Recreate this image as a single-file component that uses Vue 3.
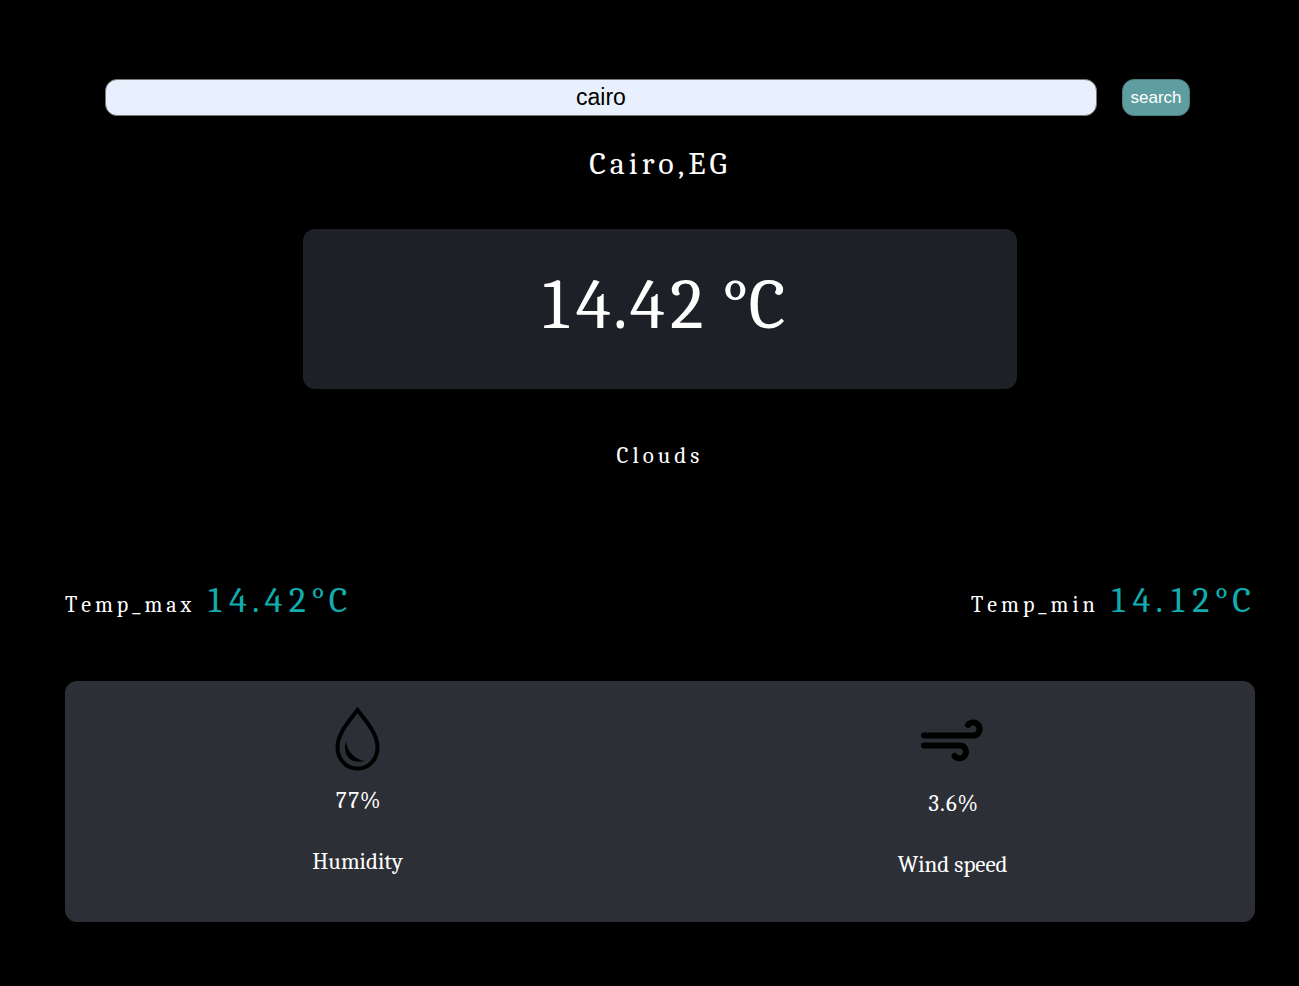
<script setup>
import { ref } from 'vue'

const city = ref('cairo')
const weather = {
  place: 'Cairo,EG',
  temp: '14.42 °C',
  sky: 'Clouds',
  max: '14.42°C',
  min: '14.12°C',
  humidity: '77%',
  wind: '3.6%',
}
</script>

<template>
  <main class="weather">
    <form class="search" @submit.prevent>
      <input v-model="city" class="search-input" type="text" aria-label="City" />
      <button class="search-button" type="submit">search</button>
    </form>

    <h1 class="place">{{ weather.place }}</h1>
    <section class="current">{{ weather.temp }}</section>
    <p class="sky">{{ weather.sky }}</p>

    <section class="range">
      <p class="range-item">Temp_max <span class="degrees">{{ weather.max }}</span></p>
      <p class="range-item">Temp_min <span class="degrees">{{ weather.min }}</span></p>
    </section>

    <section class="details">
      <div class="detail">
        <svg class="icon" width="64" height="64" viewBox="0 0 64 64" aria-hidden="true">
          <path d="M31.500 4C25.500 12 11.500 27 11.500 41C11.500 53.500 20 62.500 31.500 62.500S51.500 53.500 51.500 41C51.500 27 37.500 12 31.500 4Z" fill="none" stroke="#000" stroke-width="4" />
          <path d="M20 35.500C16 47 23.500 59 38.500 55C30 53.500 21.500 47 20 35.500Z" />
        </svg>
        <p class="value">{{ weather.humidity }}</p>
        <p class="label">Humidity</p>
      </div>
      <div class="detail detail-wind">
        <svg class="icon" width="64" height="64" viewBox="0 0 64 64" aria-hidden="true">
          <g fill="none" stroke="#000" stroke-width="6" stroke-linecap="round">
            <path d="M3 26.500H52.500A6.500 6.500 0 1 0 47 16" />
            <path d="M3 36.500H40A6.500 6.500 0 1 1 33.500 47" />
          </g>
        </svg>
        <p class="value">{{ weather.wind }}</p>
        <p class="label">Wind speed</p>
      </div>
    </section>
  </main>
</template>

<style>
body {
  background: #000;
}
</style>

<style scoped>
.weather {
  box-sizing: border-box;
  padding: 79px 44px 64px 5%;
  color: #fff;
  font-family: Cambria, "Liberation Serif", serif;
  font-size: 23px;
  font-kerning: none;
  font-variant-numeric: lining-nums tabular-nums;
  line-height: 26px;
}

p,
h1 {
  margin: 0;
}

.search {
  display: flex;
  gap: 25px;
  padding: 0 65px 0 40px;
}

.search-input {
  box-sizing: border-box;
  flex: 1;
  min-width: 0;
  height: 37px;
  padding: 0 8px;
  border: 1px solid #767676;
  border-radius: 12px;
  background: #e8f0fe;
  color: #000;
  font-family: "Liberation Sans", sans-serif;
  font-size: 23px;
  text-align: center;
}

.search-button {
  box-sizing: border-box;
  width: 68px;
  height: 37px;
  padding: 0;
  border: 1px solid #4b7c7e;
  border-radius: 12px;
  background: #5f9ea0;
  color: #fff;
  font-family: "Liberation Sans", sans-serif;
  font-size: 17px;
}

.place {
  margin-top: 30px;
  font-size: 32px;
  font-weight: 400;
  line-height: 36px;
  letter-spacing: 4px;
  text-align: center;
}

.current {
  width: 60%;
  margin: 47px auto 0;
  padding: 36px 0 44px;
  border-radius: 12px;
  background: #1e2028;
  font-size: 71px;
  line-height: 80px;
  text-align: center;
}

.sky {
  margin-top: 54px;
  letter-spacing: 4px;
  text-align: center;
}

.range {
  display: flex;
  justify-content: space-between;
  margin-top: 112px;
}

.range-item {
  font-size: 22px;
  line-height: 40px;
  letter-spacing: 4px;
}

.degrees {
  color: #12acae;
  font-size: 36px;
}

.details {
  display: flex;
  justify-content: space-around;
  margin-top: 56px;
  padding: 25px 0 44px;
  border-radius: 12px;
  background: #2d2f36;
  text-align: center;
}

.detail {
  padding-bottom: 3px;
}

.detail-wind {
  padding: 3px 0 0;
}

.icon {
  display: block;
  margin: 0 auto;
  overflow: visible;
}

.value {
  margin-top: 18px;
}

.label {
  margin-top: 35px;
}
</style>
